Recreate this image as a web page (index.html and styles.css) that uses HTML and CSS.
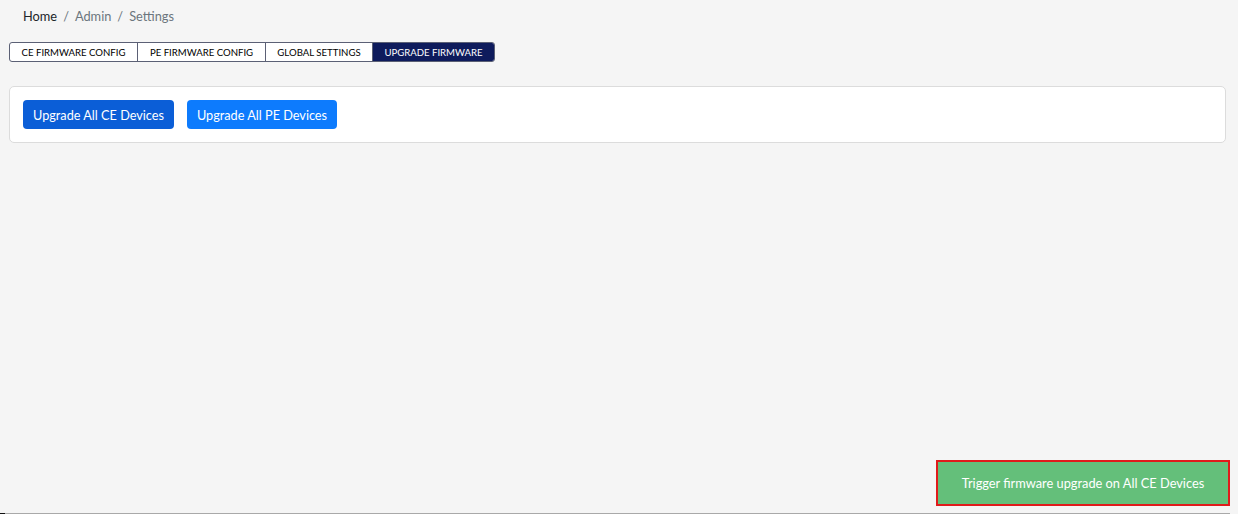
FILE: index.html
```html
<!DOCTYPE html>
<html>
<head>
<meta charset="utf-8">
<link rel="stylesheet" href="styles.css">
</head>
<body>
<div class="page">
  <nav class="breadcrumb">
    <span class="crumb crumb-home">Home</span>
    <span class="sep">/</span>
    <span class="crumb">Admin</span>
    <span class="sep">/</span>
    <span class="crumb">Settings</span>
  </nav>
  <div class="tabs">
    <div class="tab tab-ce">CE FIRMWARE CONFIG</div>
    <div class="tab tab-pe">PE FIRMWARE CONFIG</div>
    <div class="tab tab-global">GLOBAL SETTINGS</div>
    <div class="tab tab-upgrade active">UPGRADE FIRMWARE</div>
  </div>
  <div class="card">
    <button class="btn btn-dark">Upgrade All CE Devices</button>
    <button class="btn btn-light">Upgrade All PE Devices</button>
  </div>
</div>
<div class="toast">Trigger firmware upgrade on All CE Devices</div>
<div class="scrollbar"><span class="scroll-thumb"></span></div>
</body>
</html>
```
FILE: styles.css
```css
html, body {
  margin: 0;
  padding: 0;
  background: #f5f5f5;
  font-family: Lato, "Open Sans", sans-serif;
  height: 100%;
  overflow: hidden;
}
.page {
  padding: 0 12px 0 9px;
}
.breadcrumb {
  display: flex;
  align-items: center;
  gap: 6px;
  padding: 7px 0 0 14px;
  height: 18px;
  font-size: 12.8px;
  line-height: 18px;
  color: #6c757d;
}
.crumb-home {
  color: #212529;
}
.sep {
  color: #6c757d;
}
.tabs {
  display: flex;
  margin-top: 17px;
  width: 486px;
  height: 20px;
  border: 1px solid #5b6075;
  border-radius: 3px;
  box-sizing: border-box;
  overflow: hidden;
  background: #fff;
}
.tab {
  display: flex;
  align-items: center;
  justify-content: center;
  font-size: 9.6px;
  color: #000;
  border-right: 1px solid #5b6075;
  box-sizing: border-box;
  height: 100%;
  white-space: nowrap;
}
.tab-ce { width: 128px; }
.tab-pe { width: 128px; }
.tab-global { width: 107px; }
.tab-upgrade { flex: 1; border-right: none; }
.tab.active {
  background: #0e1b5c;
  color: #fff;
}
.card {
  display: flex;
  align-items: center;
  gap: 13px;
  margin-top: 24px;
  height: 57px;
  box-sizing: border-box;
  padding: 0 13px;
  background: #fff;
  border: 1px solid #dcdcdc;
  border-radius: 5px;
}
.btn {
  font-family: Lato, "Open Sans", sans-serif;
  font-size: 12.7px;
  color: #fff;
  border: none;
  border-radius: 4px;
  height: 29px;
  padding: 0;
  white-space: nowrap;
  cursor: pointer;
}
.btn-dark {
  width: 151px;
  background: #0b5ed7;
}
.btn-light {
  width: 150px;
  background: #0d7bfd;
}
.toast {
  position: fixed;
  right: 8px;
  bottom: 8px;
  width: 294px;
  height: 46px;
  box-sizing: border-box;
  border: 2px solid #e01b1b;
  background: #64bf7a;
  color: #fff;
  font-size: 12.8px;
  display: flex;
  align-items: center;
  justify-content: center;
  white-space: nowrap;
}
.scrollbar {
  position: fixed;
  left: 0;
  bottom: 0;
  width: 1230px;
  height: 1px;
  background: #a9a9a9;
}
.scroll-thumb {
  display: block;
  width: 5px;
  height: 1px;
  background: #111;
}
```
